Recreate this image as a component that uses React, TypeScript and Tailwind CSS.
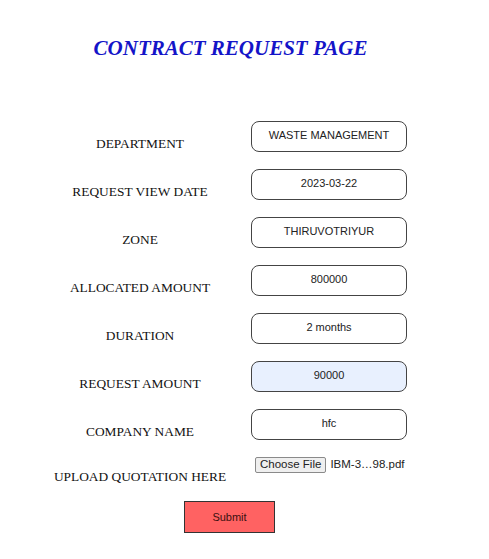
const fields = [
  { label: 'DEPARTMENT', value: 'WASTE MANAGEMENT' },
  { label: 'REQUEST VIEW DATE', value: '2023-03-22' },
  { label: 'ZONE', value: 'THIRUVOTRIYUR' },
  { label: 'ALLOCATED AMOUNT', value: '800000' },
  { label: 'DURATION', value: '2 months' },
  { label: 'REQUEST AMOUNT', value: '90000', filled: true },
  { label: 'COMPANY NAME', value: 'hfc' },
]

const serif = { fontFamily: '"Liberation Serif", "Times New Roman", serif' }
const sans = { fontFamily: '"Liberation Sans", Arial, sans-serif' }

export default function App() {
  return (
    <div className="w-[489px] h-[559px] bg-white text-[#111]" style={serif}>
      <h1 className="pt-[36px] w-[461px] text-center text-[21px] leading-[24px] font-bold italic text-[#1414c8]">
        CONTRACT REQUEST PAGE
      </h1>

      <form className="mt-[61px] flex flex-col" onSubmit={e => e.preventDefault()}>
        {fields.map(f => (
          <div key={f.label} className="flex items-start mb-[17px]">
            <label className="w-[222px] ml-[29px] pt-[15px] text-center text-[13.4px] leading-[16px]">
              {f.label}
            </label>
            <input
              readOnly
              value={f.value}
              style={sans}
              className={`w-[156px] h-[31px] pb-[3px] rounded-[8px] border-[1.5px] border-[#444] text-center text-[11px] text-[#222] outline-none ${
                f.filled ? 'bg-[#e8f0fe]' : 'bg-white'
              }`}
            />
          </div>
        ))}

        <div className="flex items-start -mt-[1px]">
          <label className="w-[222px] ml-[29px] pt-[13px] text-center text-[13.4px] leading-[16px]">
            UPLOAD QUOTATION HERE
          </label>
          <div className="flex items-center ml-[4px] text-[11.5px] text-[#222]" style={sans}>
            <span className="h-[16px] px-[4px] flex items-center bg-[#efefef] border border-[#8a8a8a] rounded-[2px]">
              Choose File
            </span>
            <span className="ml-[4px]">IBM-3…98.pdf</span>
          </div>
        </div>

        <button
          type="submit"
          style={sans}
          className="mt-[16px] ml-[184px] w-[91px] h-[32px] bg-[#ff6262] border border-[#333] text-[11px] text-[#3a1010]"
        >
          Submit
        </button>
      </form>
    </div>
  )
}
